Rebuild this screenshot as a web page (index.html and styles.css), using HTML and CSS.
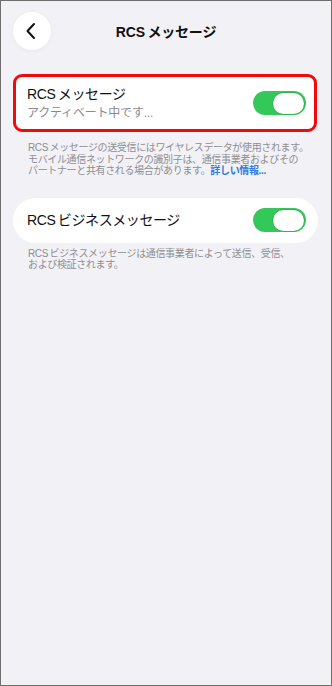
FILE: index.html
```html
<!DOCTYPE html>
<html lang="ja">
<head>
<meta charset="utf-8">
<title>RCSメッセージ</title>
<link rel="stylesheet" href="styles.css">
</head>
<body>
<div class="screen">
  <header class="nav">
    <div class="back">
      <svg width="14" height="18" viewBox="0 0 14 18"><path d="M10 2 L3.5 9 L10 16" fill="none" stroke="#111" stroke-width="2" stroke-linecap="round" stroke-linejoin="round"/></svg>
    </div>
    <div class="title">RCS メッセージ</div>
    <div class="spacer"></div>
  </header>

  <section class="group first">
    <div class="card highlighted">
      <div class="texts">
        <div class="label">RCS メッセージ</div>
        <div class="sub">アクティベート中です...</div>
      </div>
      <div class="toggle"><div class="knob"></div></div>
    </div>
    <p class="footer">RCS メッセージの送受信にはワイヤレスデータが使用されます。<br>モバイル通信ネットワークの識別子は、通信事業者およびその<br>パートナーと共有される場合があります。<span class="link">詳しい情報...</span></p>
  </section>

  <section class="group second">
    <div class="card pill">
      <div class="label">RCS ビジネスメッセージ</div>
      <div class="toggle"><div class="knob"></div></div>
    </div>
    <p class="footer two">RCS ビジネスメッセージは通信事業者によって送信、受信、<br>および検証されます。</p>
  </section>
</div>
</body>
</html>
```

FILE: styles.css
```css
html, body {
  margin: 0;
  padding: 0;
}
body {
  font-family: "Liberation Sans", "Noto Sans CJK JP", sans-serif;
  color: #111;
}
.screen {
  width: 332px;
  height: 686px;
  box-sizing: border-box;
  border: 1px solid #6e6e6e;
  background: #f2f1f6;
  overflow: hidden;
}
.nav {
  display: grid;
  grid-template-columns: 38px 1fr 38px;
  align-items: center;
  padding: 11px 12px 0 12px;
  height: 38px;
}
.back {
  width: 38px;
  height: 38px;
  border-radius: 50%;
  background: #fff;
  display: flex;
  align-items: center;
  justify-content: center;
  box-shadow: 0 1px 6px rgba(0,0,0,0.04);
}
.back svg {
  margin-left: -2px;
}
.title {
  text-align: center;
  font-size: 14px;
  font-weight: bold;
  letter-spacing: -0.2px;
  word-spacing: -1px;
}
.group {
  margin: 0 13px 0 12px;
}
.group.first {
  margin-top: 24px;
}
.group.second {
  margin-top: 21px;
}
.card {
  background: #fff;
  display: flex;
  align-items: center;
  justify-content: space-between;
}
.card.highlighted {
  border: 3px solid #f20a0a;
  border-radius: 9px;
  padding: 8px 8px 8px 11px;
  margin-right: 1px;
}
.card.pill {
  height: 45px;
  border-radius: 23px;
  padding: 0 12px 0 14px;
}
.label {
  font-size: 14px;
  line-height: 18px;
  letter-spacing: -0.4px;
  word-spacing: -1px;
}
.sub {
  font-size: 12px;
  line-height: 16px;
  color: #8a8a8e;
  margin-top: 2px;
  letter-spacing: -0.2px;
}
.toggle {
  width: 53px;
  height: 24px;
  border-radius: 12px;
  background: #34c759;
  position: relative;
  flex: none;
}
.knob {
  position: absolute;
  right: 2px;
  top: 1.5px;
  width: 31px;
  height: 21px;
  border-radius: 11px;
  background: #fff;
  box-shadow: 0 0 0 0.5px rgba(0,80,20,0.25);
}
.footer {
  margin: 10px 0 0 0;
  padding: 0 0 0 15px;
  font-size: 10px;
  line-height: 11.5px;
  color: #8e8e93;
  letter-spacing: -0.35px;
  word-spacing: -1px;
  white-space: nowrap;
}
.footer.two {
  margin-top: 5px;
}
.link {
  color: #2f7be0;
  font-weight: bold;
}
```
